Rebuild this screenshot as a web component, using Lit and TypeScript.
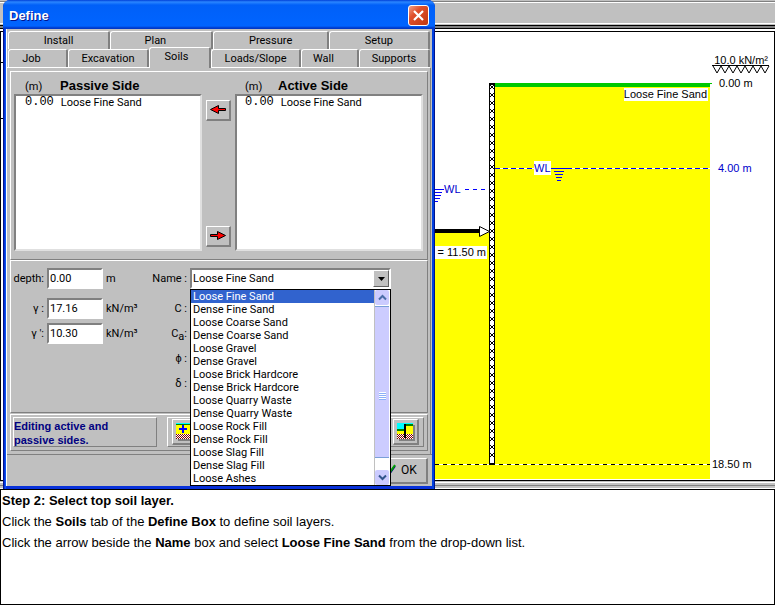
import { LitElement, html, svg, css } from "lit";
import { customElement, property, state } from "lit/decorators.js";
import { classMap } from "lit/directives/class-map.js";

const SOILS = [
  "Loose Fine Sand", "Dense Fine Sand", "Loose Coarse Sand", "Dense Coarse Sand",
  "Loose Gravel", "Dense Gravel", "Loose Brick Hardcore", "Dense Brick Hardcore",
  "Loose Quarry Waste", "Dense Quarry Waste", "Loose Rock Fill", "Dense Rock Fill",
  "Loose Slag Fill", "Dense Slag Fill", "Loose Ashes",
];

/** Cross-section of the retaining wall, soil and water levels. */
@customElement("section-drawing")
export class SectionDrawing extends LitElement {
  static styles = css`
    :host { display: block; }
    svg { display: block; width: 100%; height: auto; }
    text { font: 11px "Liberation Sans", Arial, sans-serif; fill: #000; }
    .water { fill: #00c; }
    .water-line { stroke: #00f; fill: none; }
  `;

  render() {
    const crosses = Array.from({ length: 47 }, (_, i) => 87 + i * 8);
    return html`
      <svg viewBox="1 32 773 448" role="img" aria-label="Wall cross-section" shape-rendering="crispEdges">
        <rect x="1" y="32" width="773" height="448" fill="#fff" />
        <rect x="1" y="62" width="3" height="1" />
        <rect x="1" y="118" width="3" height="1" />
        <rect x="300" y="233" width="190" height="246" fill="#ff0" />
        <rect x="489" y="87" width="221" height="392" fill="#ff0" />
        <rect x="495" y="83" width="215" height="4" fill="#00c800" />
        <rect x="710" y="83" width="2" height="1" fill="#00c800" />
        <rect x="624" y="88" width="84" height="13" fill="#fff" />
        <text x="707" y="98" text-anchor="end">Loose Fine Sand</text>

        <path d="M435 464.5H710" stroke="#fff" />
        <path d="M435 464.5H710" stroke="#000" stroke-dasharray="4 4" />
        <path d="M495 168.5H710" stroke="#fff" />
        <path class="water-line" d="M495 168.5H710" stroke-dasharray="5 3" />
        <rect x="534" y="161" width="17" height="14" fill="#fff" />
        <text class="water" x="534" y="172">WL</text>
        <path class="water-line" d="M553 168.5H567M554 171.5H564M555 174.5H563M556 177.5H562M557 180.5H561" />

        <path class="water-line" d="M435 189.5H444M435 192.5H442M435 195.5H441M435 198.5H440M435 201.5H438" />
        <text class="water" x="444" y="193">WL</text>
        <path class="water-line" d="M465 189.5H469M473 189.5H477M481 189.5H485" />

        <rect x="489" y="83" width="6" height="382" />
        <rect x="490" y="85" width="4" height="378" fill="#fff" />
        ${crosses.map((y) => svg`<path d="M490 ${y - 2}l4 4M494 ${y - 2}l-4 4" stroke="#000" shape-rendering="auto" />`)}

        <rect x="430" y="229" width="50" height="4" />
        <path d="M479.500 226.500L489.500 231.500L479.500 236.500Z" fill="#fff" stroke="#000" shape-rendering="auto" />
        <rect x="420" y="246" width="67" height="13" fill="#fff" />
        <text x="486" y="256" text-anchor="end">e = 11.50 m</text>

        <text x="768" y="64" text-anchor="end">10.0 kN/m²</text>
        <path d="M712 65.500H769M713 66l4 7l4 -7l4 7l4 -7l4 7l4 -7l4 7l4 -7l4 7l4 -7l4 7l4 -7l4 7l4 -7"
          fill="none" stroke="#000" shape-rendering="auto" />
        <text x="719" y="87">0.00 m</text>
        <text class="water" x="718" y="172">4.00 m</text>
        <text x="712" y="468">18.50 m</text>
      </svg>
    `;
  }
}

/** Floating dialog in which the soil layers are defined. */
@customElement("define-dialog")
export class DefineDialog extends LitElement {
  @property() tab = "Soils";
  @state() private soil = SOILS[0];

  static styles = css`
    :host {
      display: block;
      box-sizing: border-box;
      width: 432px;
      padding: 0 3px 3px;
      border-radius: 7px 7px 0 0;
      background: linear-gradient(90deg, #00138c 0 1px, #0831d9 1px 2px, #0855f0 2px 3px, #0831d9 3px calc(100% - 3px), #0040e0 calc(100% - 3px) calc(100% - 1px), #00138c calc(100% - 1px));
      font: 11px/15px Roboto, "Liberation Sans", Arial, sans-serif;
      color: #000;
    }
    * { box-sizing: border-box; }
    button, input, select { font: inherit; color: inherit; margin: 0; border-radius: 0; appearance: none; }
    button { background: #c0c0c0; padding: 0; }
    h1, h2, p, ul { margin: 0; padding: 0; }
    ul { list-style: none; }
    svg { display: block; }

    .title {
      display: flex; align-items: center; justify-content: space-between;
      height: 29px; margin: 0 -3px; padding: 2px 6px 0 6px;
      border-radius: 7px 7px 0 0;
      background: linear-gradient(#0040d8 0, #2a86ff 2px, #0060f8 5px, #0064ff 26px, #0038c8 28px);
    }
    .title h1 { font: bold 13px/16px "Liberation Sans", Arial, sans-serif; color: #fff; text-shadow: 1px 1px #00138c; }
    .close {
      display: grid; place-items: center; width: 21px; height: 21px;
      border: 1px solid #fff; border-radius: 3px;
      background: linear-gradient(135deg, #f0a088, #e0502c 35%, #c03810);
    }
    .body { background: #c0c0c0; padding-top: 2px; border-left: 1px solid #fff; }

    .tabs { display: grid; margin: 0 2px 0 1px; height: 18px; }
    .tab { height: 18px; border: 1px solid #fff; border-right: 2px solid #808080; border-bottom: 0; border-radius: 3px 2px 0 0; }
    .tab.short { padding-right: 12px; }
    .tab.on { height: 21px; padding: 0 6px 3px 0; margin-top: -2px; position: relative; }
    .page { border-top: 1px solid #fff; border-right: 1px solid #808080; padding: 3px 2px 3px 3px; margin-right: 1px; }
    .frame { border: 1px solid #fff; border-right-color: #808080; border-bottom-color: #808080; }

    .layers { display: grid; grid-template-columns: 188px 1fr 188px; gap: 0 4px; padding: 6px 4px 8px 3px; }
    .side { display: flex; flex-direction: column; }
    .side header { display: flex; align-items: center; height: 16px; padding-left: 11px; }
    .side header span { width: 35px; }
    .side.active header { padding-left: 10px; }
    .side.active header span { width: 33px; }
    h2 { font: bold 13px/16px "Liberation Sans", Arial, sans-serif; }
    .list { height: 157px; padding: 0 0 0 9px; background: #fff; border: 2px solid #808080; border-right-color: #e0e0e0; border-bottom-color: #e0e0e0; }
    .list li { display: flex; align-items: center; gap: 7px; height: 13px; }
    .side.active .list { padding-left: 8px; }
    .mono { font: 12px/13px "Liberation Mono", monospace; }
    .movers { display: flex; flex-direction: column; justify-content: space-between; padding: 22px 0 4px; }
    .bevel { display: grid; place-items: center; border: 1px solid #fff; border-right: 2px solid #808080; border-bottom: 2px solid #808080; }
    .movers .bevel { height: 21px; }

    .form { display: flex; gap: 14px; height: 153px; padding: 7px 36px 0 2px; }
    .col { display: flex; flex-direction: column; gap: 4px; }
    .col.wide { flex: 1; }
    .row { display: grid; grid-template-columns: 31px 56px 32px; gap: 3px; height: 21px; align-items: center; }
    .wide .row { grid-template-columns: 35px 1fr; }
    .row:first-child { margin-bottom: 5px; }
    .row label { text-align: right; white-space: nowrap; }
    .row input, .row select {
      width: 100%; height: 21px; padding: 0 1px 1px; background: #fff;
      border: 2px solid #808080; border-right-color: #fff; border-bottom-color: #fff; outline: 0;
    }
    .wide input { width: 56px; }
    sub { font-size: 11px; line-height: 1px; }

    .combo { position: relative; }
    .combo .drop {
      position: absolute; top: 2px; right: 2px; width: 16px; height: 17px;
      display: grid; place-items: center; pointer-events: none;
      background: #c0c0c0; border: 1px solid #fff; border-right-color: #606060; border-bottom-color: #606060;
    }
    .popup {
      position: absolute; z-index: 1; top: 100%; left: 0; right: 0; display: flex;
      background: #fff; border: 1px solid #000;
    }
    .popup ul { flex: 1; }
    .popup li { padding-left: 2px; line-height: 13px; height: 13px; cursor: default; }
    .popup li.on { background: #3163ce; color: #fff; }
    .scroll { width: 16px; display: flex; flex-direction: column; justify-content: space-between; padding-right: 1px; border-left: 1px solid #c0c0c0; background: #fff; }
    .scroll .cap { height: 15px; display: grid; place-items: center; background: #cbcbff; border-radius: 2px; }
    .thumb { flex: 1; margin: 1px 0 12px; padding-top: 28px; display: grid; place-items: center; background: #ccf; border-top: 1px solid #7a9fd8; border-bottom: 1px solid #7a9fd8; }
    .grip { width: 7px; height: 8px; background: repeating-linear-gradient(#fff 0 1px, #8cb0f8 1px 2px); }

    .strip { display: flex; gap: 10px; height: 37px; padding: 2px 3px 3px 2px; margin-top: 1px; }
    .status { width: 144px; padding-top: 1px; font: bold 11px/14px "Liberation Sans", Arial, sans-serif; color: #000080; }
    .tools { flex: 1; display: flex; justify-content: space-between; align-items: center; padding: 0 4px; }
    .tools .bevel { width: 26px; height: 26px; }
    .actions { display: flex; justify-content: flex-end; border-top: 1px solid #808080; padding: 3px 4px 2px; height: 32px; }
    .ok { width: 75px; display: flex; align-items: center; gap: 5px; padding-left: 32px; font-size: 12px; }
    .ok svg { margin-bottom: 4px; }
  `;

  private tabRow(tabs: [string, number][]) {
    const columns = tabs.map(([, share]) => `minmax(0, ${share}fr)`).join(" ");
    return html`<div class="tabs" role="tablist" style="grid-template-columns: ${columns}">
      ${tabs.map(([name]) => html`<button role="tab" aria-selected=${name === this.tab}
        class=${classMap({ tab: true, on: name === this.tab, short: name.length < 5 })}
        @click=${() => (this.tab = name)}>${name}</button>`)}
    </div>`;
  }

  private side(title: string, active: boolean) {
    return html`<section class=${classMap({ side: true, active })}>
      <header><span>(m)</span><h2>${title}</h2></header>
      <ul class="list" role="listbox" aria-label=${title}>
        <li role="option"><span class="mono">0.00</span>Loose Fine Sand</li>
      </ul>
    </section>`;
  }

  private arrow(right: boolean) {
    return svg`<svg width="18" height="12" viewBox="0 0 18 12">
      <path d=${right ? "M1.500 4.500H8.500V1.500L16.500 5.500L8.500 9.500V6.500H1.500Z" : "M16.500 4.500H9.500V1.500L1.500 5.500L9.500 9.500V6.500H16.500Z"}
        fill="#f00" stroke="#000" /></svg>`;
  }

  private soilIcon(wall: boolean) {
    return svg`<svg width="18" height="18" viewBox="0 0 18 18" shape-rendering="crispEdges">
      <rect x="2" y="2" width="16" height="16" fill="#808080" />
      <rect width="16" height="16" fill="#ff0" />
      <rect width=${wall ? 8 : 16} height=${wall ? 6 : 1} fill="#0ff" />
      <rect y=${wall ? 6 : 1} width=${wall ? 8 : 16} height=${wall ? 2 : 1} fill="#008000" />
      <rect x="8" width=${wall ? 8 : 0} height="1" fill="#0ff" />
      <rect x="8" y="1" width=${wall ? 8 : 0} height="2" fill="#008000" />
      <rect y="11" width="16" height="5" fill="#fff" />
      ${[0, 1, 2, 3, 4].map((r) => svg`<path d="M${r % 2} ${11.5 + r}H16" stroke="#800000" stroke-dasharray="1 1" />`)}
      ${wall
        ? svg`<rect x="7" y="1" width="2" height="14" />`
        : svg`<path d="M3 6H11M7 2V10" stroke="#00f" stroke-width="2" />`}
    </svg>`;
  }

  render() {
    return html`
      <header class="title">
        <h1>Define</h1>
        <button class="close" aria-label="Close">
          <svg width="13" height="13" viewBox="0 0 13 13"><path d="M2 2L11 11M11 2L2 11" stroke="#fff" stroke-width="2.200" /></svg>
        </button>
      </header>
      <div class="body">
        ${this.tabRow([["Install", 102], ["Plan", 103], ["Pressure", 115], ["Setup", 101]])}
        ${this.tabRow([["Job", 60], ["Excavation", 81], ["Soils", 62], ["Loads/Slope", 90], ["Wall", 58], ["Supports", 71]])}
        <div class="page">
          <div class="frame layers">
            ${this.side("Passive Side", false)}
            <div class="movers">
              <button class="bevel" aria-label="Copy to passive side">${this.arrow(false)}</button>
              <button class="bevel" aria-label="Copy to active side">${this.arrow(true)}</button>
            </div>
            ${this.side("Active Side", true)}
          </div>
          <div class="frame form">
            <div class="col">
              <div class="row"><label for="depth">depth:</label><input id="depth" value="0.00" /><span>m</span></div>
              <div class="row"><label for="gamma">γ :</label><input id="gamma" value="17.16" /><span>kN/m³</span></div>
              <div class="row"><label for="gamma2">γ ':</label><input id="gamma2" value="10.30" /><span>kN/m³</span></div>
            </div>
            <div class="col wide">
              <div class="row"><label for="name">Name :</label>
                <div class="combo">
                  <select id="name"><option selected>${this.soil}</option></select>
                  <span class="drop"><svg width="7" height="4" viewBox="0 0 7 4"><path d="M0 0H7L3.500 4Z" /></svg></span>
                  <div class="popup">
                    <ul role="listbox" aria-label="Soil names">
                      ${SOILS.map((s) => html`<li role="option" class=${classMap({ on: s === this.soil })}
                        aria-selected=${s === this.soil} @click=${() => (this.soil = s)}>${s}</li>`)}
                    </ul>
                    <div class="scroll">
                      <span class="cap"><svg width="9" height="7" viewBox="0 0 9 7"><path d="M1 5.500L4.500 2L8 5.500" fill="none" stroke="#4a6da8" stroke-width="2" /></svg></span>
                      <span class="thumb"><span class="grip"></span></span>
                      <span class="cap"><svg width="9" height="7" viewBox="0 0 9 7"><path d="M1 1.500L4.500 5L8 1.500" fill="none" stroke="#31548c" stroke-width="2" /></svg></span>
                    </div>
                  </div>
                </div>
              </div>
              <div class="row"><label for="c">C :</label><input id="c" /></div>
              <div class="row"><label for="ca">C<sub>a</sub>:</label><input id="ca" /></div>
              <div class="row"><label for="phi">ϕ :</label><input id="phi" /></div>
              <div class="row"><label for="delta">δ :</label><input id="delta" /></div>
            </div>
          </div>
          <div class="frame strip">
            <p class="frame status">Editing active and<br />passive sides.</p>
            <div class="frame tools">
              <button class="bevel" aria-label="Add layer">${this.soilIcon(false)}</button>
              <button class="bevel" aria-label="Show wall">${this.soilIcon(true)}</button>
            </div>
          </div>
        </div>
        <div class="actions">
          <button class="bevel ok">
            <svg width="10" height="10" viewBox="0 0 10 10"><path d="M1 6L4 9L9 2" fill="none" stroke="#000080" stroke-width="2" /><path d="M1 5L4 8L9 1" fill="none" stroke="#00a000" stroke-width="2" /></svg>OK
          </button>
        </div>
      </div>
    `;
  }
}

@customElement("app-root")
export class AppRoot extends LitElement {
  static styles = css`
    :host {
      display: flex; flex-direction: column; min-height: 100vh; position: relative;
      background: #fff; color: #000;
      font: 13px/21px "Liberation Sans", Arial, sans-serif;
    }
    .toolbar {
      height: 31px;
      background: linear-gradient(#c0c0c0 0 1px, #808080 1px 2px, #fff 2px 3px, #c0c0c0 3px 23px, #fff 23px 24px, #c0c0c0 24px 25px, #000 25px 26px, #808080 26px 28px, #000 28px 29px, #fff 29px);
    }
    .canvas { border: 1px solid #000; }
    .sill { height: 8px; background: linear-gradient(#c0c0c0 0 1px, #fff 1px 2px, #c0c0c0 2px 4px, #808080 4px 5px, #c0c0c0 5px 7px, #fff 7px); }
    .steps { flex: 1; border: 1px solid #000; padding-left: 1px; }
    .steps p { margin: 0; }
    .dialog { position: absolute; top: 0; left: 3px; }
  `;

  render() {
    return html`
      <div class="toolbar"></div>
      <div class="canvas"><section-drawing></section-drawing></div>
      <div class="sill"></div>
      <article class="steps">
        <p><b>Step 2: Select top soil layer.</b></p>
        <p>Click the <b>Soils</b> tab of the <b>Define Box</b> to define soil layers.</p>
        <p>Click the arrow beside the <b>Name</b> box and select <b>Loose Fine Sand</b> from the drop-down list.</p>
      </article>
      <define-dialog class="dialog"></define-dialog>
    `;
  }
}
